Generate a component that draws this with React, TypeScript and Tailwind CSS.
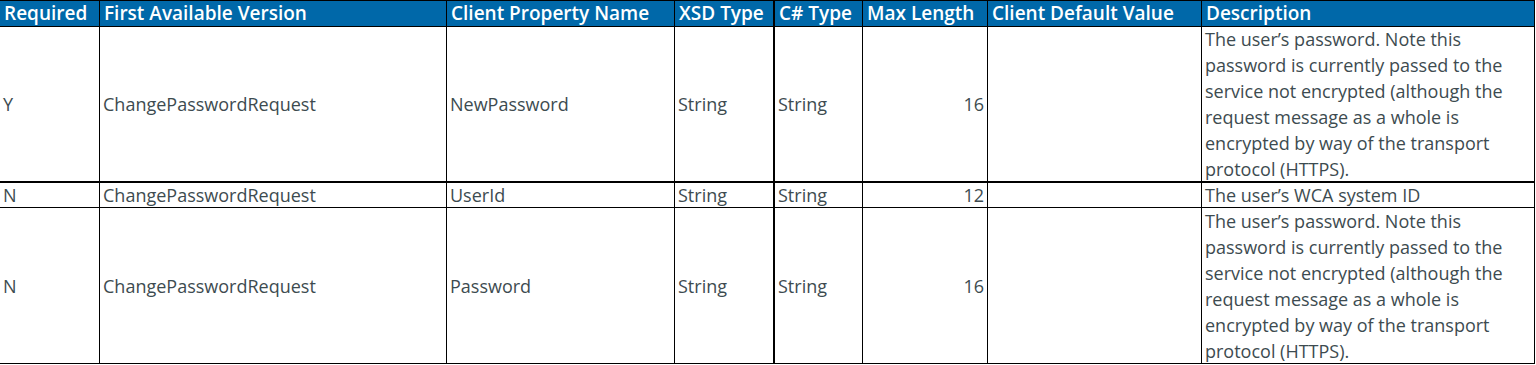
import React from "react";

const cols = ["w-[99px]", "w-[347px]", "w-[228px]", "w-[99px]", "w-[89px]", "w-[125px]", "w-[214px]", "w-[334px]"];
const heads = ["Required", "First Available Version", "Client Property Name", "XSD Type", "C# Type", "Max Length", "Client Default Value", "Description"];
const desc = "The user’s password. Note this password is currently passed to the service not encrypted (although the request message as a whole is encrypted by way of the transport protocol (HTTPS).";
const rows = [
  { h: "h-[156px] border-b-2", cells: ["Y", "ChangePasswordRequest", "NewPassword", "String", "String", "16", "", desc] },
  { h: "h-[25px] border-b", cells: ["N", "ChangePasswordRequest", "UserId", "String", "String", "12", "", "The user’s WCA system ID"] },
  { h: "h-[156px] border-b", cells: ["N", "ChangePasswordRequest", "Password", "String", "String", "16", "", desc] },
];

function borderFor(i: number) {
  if (i === 0) return "";
  if (i === 4) return "border-l-2 border-black";
  if (i === 7) return "border-l border-r border-black";
  return "border-l border-black";
}

export default function App() {
  return (
    <div className="bg-white w-[1536px] h-[365px] overflow-hidden text-[18px] text-[#3d4b50]" style={{ fontFamily: '"Open Sans", sans-serif' }}>
      <div className="flex h-[27px] border-t border-b border-black bg-[#0068a9] text-white w-[1535px]">
        {heads.map((h, i) => (
          <div key={i} className={`${cols[i]} shrink-0 flex items-center px-[4px] text-[19px] font-semibold whitespace-nowrap overflow-hidden ${borderFor(i)}`}>
            {h}
          </div>
        ))}
      </div>
      {rows.map((r, ri) => (
        <div key={ri} className={`flex w-[1535px] border-black ${r.h}`}>
          {r.cells.map((c, ci) => (
            <div
              key={ci}
              className={`${cols[ci]} shrink-0 flex items-center px-[3px] ${ci === 5 ? "justify-end" : ""} ${ci === 7 ? "leading-[26px] pr-[8px]" : "leading-[24px]"} ${borderFor(ci)}`}
            >
              {c}
            </div>
          ))}
        </div>
      ))}
    </div>
  );
}
